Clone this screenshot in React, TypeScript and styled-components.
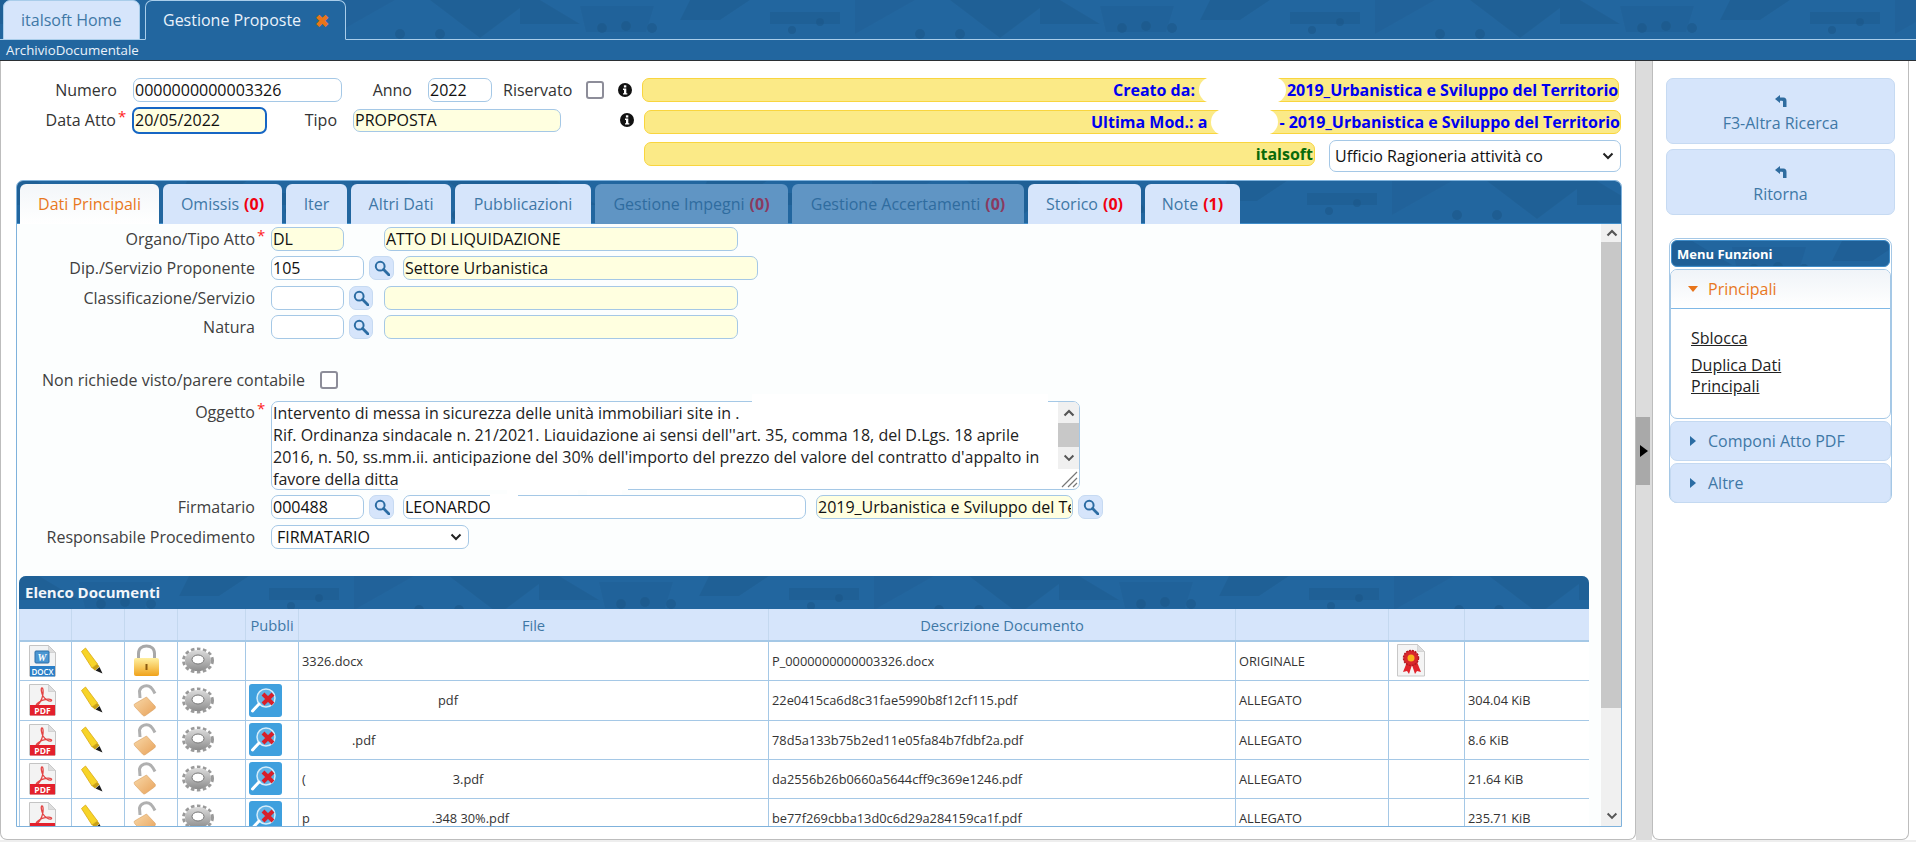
import React from "react";
import styled, { createGlobalStyle, css } from "styled-components";

const skylineSvg = `<svg xmlns='http://www.w3.org/2000/svg' width='520' height='44'><g fill='#1d5a8e' fill-opacity='.55'><path d='M0 0h20l40 24h-60z'/><path d='M60 6h74l-8 26h-60z' fill-opacity='.35'/><path d='M170 0h60l-30 20h-40z'/><path d='M250 12h70v12h-70z'/><path d='M335 0h60l-60 34z' fill-opacity='.3'/><path d='M430 0h90v8l-40 30z'/></g><g fill='#1b5688' fill-opacity='.6'><circle cx='82' cy='28' r='5'/><circle cx='106' cy='26' r='5'/><circle cx='132' cy='28' r='5'/><circle cx='272' cy='30' r='4'/><circle cx='300' cy='22' r='4'/><circle cx='400' cy='34' r='5'/><circle cx='440' cy='34' r='5'/></g></svg>`;
const skyline = `url("data:image/svg+xml,${encodeURIComponent(skylineSvg)}")`;

const blueBand = css`
  background-color: #22669f;
  background-image: ${skyline};
`;

const Global = createGlobalStyle`
  html, body { margin: 0; padding: 0; overflow: hidden; background: #fff; }
  * { box-sizing: border-box; }
  body { font-family: "Open Sans", "Liberation Sans", sans-serif; font-size: 16px; color: #333; }
`;

const Page = styled.div`
  width: 1916px;
  height: 842px;
  display: flex;
  flex-direction: column;
  overflow: hidden;
`;
const TopBar = styled.div`
  ${blueBand}
  height: 40px;
  padding-left: 3px;
  display: flex;
  align-items: flex-end;
  gap: 5px;
  border-bottom: 1px solid #a9cdea;
`;
const TopTab = styled.div<{ $active?: boolean }>`
  height: 40px;
  margin-bottom: -1px;
  display: flex;
  align-items: center;
  font-size: 16px;
  border: 1px solid #a9cdea;
  border-radius: 7px 7px 0 0;
  ${(p) =>
    p.$active
      ? css`
          background: #22669f;
          color: #eaf2fb;
          border-bottom-color: #22669f;
          width: 201px;
          padding-left: 17px;
        `
      : css`
          background: #d6e5fb;
          color: #3f78a6;
          width: 137px;
          padding-left: 17px;
        `}
`;
const Close = styled.span`
  color: #e8751a;
  font-weight: 700;
  font-size: 17px;
  margin-left: 14px;
`;
const SubBar = styled.div`
  background: #22669f;
  height: 21px;
  padding-left: 6px;
  color: #eaf2fb;
  font-size: 13.3px;
  line-height: 21px;
  border-bottom: 1px solid #2b2f33;
  flex: none;
`;
const Work = styled.div`
  flex: 1;
  display: flex;
  min-height: 0;
  background: #fff;
  border-bottom: 2px solid #eee;
`;
const MainPanel = styled.div`
  width: 1636px;
  background: #fff;
  border: 1px solid #bdbdbd;
  border-top: none;
  border-radius: 0 0 7px 7px;
  display: flex;
  flex-direction: column;
`;
const Gutter = styled.div`
  width: 16px;
  background: #dcdcdc;
  display: flex;
  align-items: center;
`;
const Handle = styled.div`
  width: 14px;
  height: 68px;
  background: #a9a9a9;
  display: flex;
  align-items: center;
  justify-content: flex-end;
  padding-right: 2px;
`;
const HandleArrow = styled.div`
  width: 0;
  height: 0;
  border-left: 8px solid #000;
  border-top: 6px solid transparent;
  border-bottom: 6px solid transparent;
`;
const SidePanel = styled.div`
  width: 257px;
  background: #fff;
  border: 1px solid #bdbdbd;
  border-top: none;
  border-radius: 0 0 7px 7px;
  padding: 17px 13px 0;
`;

/* header form */
const Head = styled.div`
  padding-top: 17px;
  height: 119px;
  flex: none;
`;
const HeadRow = styled.div<{ $h: number; $top?: number }>`
  display: flex;
  align-items: center;
  height: ${(p) => p.$h}px;
  margin-top: ${(p) => p.$top ?? 0}px;
`;
const HLabel = styled.span<{ $w: number }>`
  width: ${(p) => p.$w}px;
  text-align: right;
  flex: none;
  position: relative;
  white-space: nowrap;
`;
const Star = styled.span`
  position: absolute;
  left: 100%;
  top: -3px;
  margin-left: 2px;
  color: #f22;
  font-size: 15px;
`;
const PlainLabel = styled.span<{ $ml: number }>`
  margin-left: ${(p) => p.$ml}px;
  white-space: nowrap;
`;
const Field = styled.input<{ $w: number; $ml?: number; $yellow?: boolean; $focus?: boolean; $h?: number }>`
  width: ${(p) => p.$w}px;
  height: ${(p) => p.$h ?? 24}px;
  margin-left: ${(p) => p.$ml ?? 0}px;
  flex: none;
  padding: 0 1px;
  font: 16px "Open Sans", sans-serif;
  color: #111;
  border: 1px solid #a5c8e6;
  border-radius: 7px;
  background: ${(p) => (p.$yellow ? "#ffffe0" : "#fff")};
  outline: none;
  ${(p) =>
    p.$focus &&
    css`
      border: 2px solid #1666c4;
      border-radius: 7px;
    `}
`;
const CheckBox = styled.span<{ $ml: number }>`
  display: inline-block;
  flex: none;
  width: 18px;
  height: 18px;
  margin-left: ${(p) => p.$ml}px;
  border: 2px solid #8d8d99;
  border-radius: 3px;
  background: #fff;
`;
const InfoWrap = styled.span<{ $ml: number }>`
  margin-left: ${(p) => p.$ml}px;
  width: 14px;
  height: 14px;
  display: flex;
  flex: none;
`;
const Yellow = styled.div<{ $w: number; $ml: number; $self?: string; $top?: number }>`
  width: ${(p) => p.$w}px;
  height: 24px;
  margin-left: ${(p) => p.$ml}px;
  margin-top: ${(p) => p.$top ?? 0}px;
  align-self: ${(p) => p.$self ?? "center"};
  flex: none;
  background: #fbea87;
  border: 1px solid #f9d53e;
  border-radius: 7px;
  display: flex;
  justify-content: flex-end;
  align-items: center;
  font-weight: 700;
  font-size: 16px;
  color: #0000f0;
  white-space: nowrap;
  overflow: visible;
`;
const Green = styled.span`
  color: #0a6a0a;
  padding-right: 1px;
`;
const Masked = styled.span<{ $w: number }>`
  width: ${(p) => p.$w}px;
  height: 26px;
  margin: 0 1px 0 4px;
  flex: none;
  background: #fff;
  border-radius: 14px;
`;
const SelectBox = styled.div<{ $w: number; $h: number; $ml: number }>`
  width: ${(p) => p.$w}px;
  height: ${(p) => p.$h}px;
  margin-left: ${(p) => p.$ml}px;
  flex: none;
  position: relative;
  display: flex;
  align-items: center;
  padding-left: 5px;
  border: 1px solid #a5c8e6;
  border-radius: 7px;
  background: #fff;
  color: #111;
  white-space: nowrap;
`;
const SelectArrow = styled.svg`
  position: absolute;
  right: 6px;
  top: 50%;
  margin-top: -4px;
`;

/* tabs */
const TabPanel = styled.div`
  margin-left: 15px;
  width: 1606px;
  height: 647px;
  flex: none;
  border: 1px solid #7fb2dc;
  border-top-width: 1px;
  border-radius: 7px 7px 0 0;
  display: flex;
  flex-direction: column;
  overflow: hidden;
`;
const Strip = styled.div`
  ${blueBand}
  height: 43px;
  flex: none;
  display: flex;
  align-items: flex-end;
  padding-left: 3px;
  gap: 4px;
  border-bottom: 1px solid #3f8cc8;
`;
const Tab = styled.div<{ $w: number; $state?: "active" | "off" }>`
  width: ${(p) => p.$w}px;
  height: 40px;
  margin-bottom: -1px;
  flex: none;
  display: flex;
  align-items: center;
  justify-content: center;
  border-radius: 6px 6px 0 0;
  font-size: 16px;
  white-space: nowrap;
  background: #d6e5fb;
  color: #3f78a6;
  ${(p) =>
    p.$state === "active" &&
    css`
      background: linear-gradient(#f3f6f9, #fff);
      color: #e8781e;
    `}
  ${(p) =>
    p.$state === "off" &&
    css`
      background: #6095c4;
      color: #2f6c9f;
    `}
`;
const Count = styled.b<{ $off?: boolean }>`
  color: ${(p) => (p.$off ? "#8a3a60" : "#f00010")};
  margin-left: 5px;
  font-weight: 700;
`;
const TabBody = styled.div`
  flex: 1;
  min-height: 0;
  display: flex;
  background: #fcfefe;
`;
const FormArea = styled.div`
  width: 1584px;
  flex: none;
  position: relative;
  padding-top: 3px;
  overflow: hidden;
`;
const Row = styled.div<{ $top?: number }>`
  display: flex;
  align-items: center;
  margin-top: ${(p) => p.$top ?? 0}px;
`;
const TopRow = styled(Row)`
  align-items: flex-start;
`;
const Label = styled.span`
  width: 238px;
  margin-right: 16px;
  flex: none;
  position: relative;
  text-align: right;
  white-space: nowrap;
  color: #404040;
`;
const CheckLabel = styled.span`
  margin-left: 25px;
  white-space: nowrap;
  color: #404040;
`;
const LookBtn = styled.span<{ $w?: number; $ml?: number }>`
  width: ${(p) => p.$w ?? 25}px;
  height: 24px;
  margin-left: ${(p) => p.$ml ?? 5}px;
  flex: none;
  background: #d6e5fb;
  border: 1px solid #c6daf2;
  border-radius: 7px;
  display: flex;
  align-items: center;
  justify-content: center;
`;
const Memo = styled.div`
  width: 809px;
  height: 89px;
  flex: none;
  position: relative;
  border: 1px solid #a5c8e6;
  border-radius: 7px;
  background: #fff;
  padding: 0 24px 0 1px;
  line-height: 22px;
  color: #222;
  overflow: hidden;
  white-space: nowrap;
`;
const MemoBar = styled.div`
  position: absolute;
  top: 0;
  right: 0;
  width: 21px;
  height: 67px;
  background: #f0f0f0;
  display: flex;
  flex-direction: column;
`;
const MemoThumb = styled.div`
  height: 24px;
  background: #c8c8c8;
`;
const ArrowCell = styled.div<{ $h: number }>`
  height: ${(p) => p.$h}px;
  flex: none;
  display: flex;
  align-items: center;
  justify-content: center;
  background: #f0f0f0;
`;
const Grip = styled.svg`
  position: absolute;
  right: 1px;
  bottom: 1px;
`;
const Blot = styled.div<{ $x: number; $y: number; $w: number; $h: number }>`
  position: absolute;
  left: ${(p) => p.$x - 17}px;
  top: ${(p) => p.$y - 224}px;
  width: ${(p) => p.$w}px;
  height: ${(p) => p.$h}px;
  background: #fff;
`;
const Scroll = styled.div`
  width: 21px;
  flex: none;
  display: flex;
  flex-direction: column;
  background: #f0f0f0;
`;
const ScrollThumb = styled.div`
  height: 466px;
  background: #c8c8c8;
  flex: none;
`;
const Spacer = styled.div`
  flex: 1;
`;

/* documents */
const Docs = styled.div`
  margin: 27px 0 0 2px;
  width: 1570px;
  height: 253px;
  border-radius: 7px 7px 0 0;
  overflow: hidden;
  border-bottom: 1px solid #a5c8e6;
`;
const DocsTitle = styled.div`
  ${blueBand}
  height: 33px;
  padding-left: 6px;
  line-height: 32px;
  color: #f2f6fa;
  font-weight: 700;
  font-size: 15px;
`;
const Table = styled.table`
  border-collapse: collapse;
  table-layout: fixed;
  width: 1570px;
`;
const Th = styled.th`
  height: 32px;
  padding: 0;
  background: #d6e5fb;
  border: 1px solid #c4d8ef;
  border-bottom: 2px solid #a5c8e6;
  border-top: none;
  font-weight: 400;
  font-size: 14.7px;
  color: #3f78a6;
  overflow: hidden;
  white-space: nowrap;
`;
const Td = styled.td<{ $h: number }>`
  height: ${(p) => p.$h}px;
  padding: 0 0 0 3px;
  background: #fff;
  border: 1px solid #a5c8e6;
  font-size: 12.8px;
  color: #333;
  white-space: nowrap;
  overflow: hidden;
  vertical-align: middle;
`;
const IconTd = styled(Td)<{ $pad: number }>`
  padding-left: ${(p) => p.$pad}px;
  line-height: 0;
`;
const Pad = styled.span<{ $w: number }>`
  display: inline-block;
  width: ${(p) => p.$w}px;
`;

/* side */
const BigBtn = styled.div`
  height: 66px;
  margin-bottom: 5px;
  background: #d6e5fb;
  border: 1px solid #c6daf2;
  border-radius: 7px;
  display: flex;
  flex-direction: column;
  align-items: center;
  padding-top: 16px;
  color: #3f78a6;
  font-size: 16px;
  line-height: 22px;
`;
const BtnLabel = styled.span`
  margin-top: 5px;
`;
const Menu = styled.div`
  margin: 23px 3px 0;
  height: 265px;
  border: 1px solid #a5c8e6;
  border-radius: 8px;
`;
const MenuTitle = styled.div`
  ${blueBand}
  margin: 1px 1px 2px;
  height: 27px;
  border-radius: 6px;
  padding-left: 5px;
  color: #fff;
  font-weight: 700;
  font-size: 13px;
  line-height: 26px;
  border: 1px solid #3f8cc8;
`;
const Section = styled.div`
  border: 1px solid #a5c8e6;
  border-radius: 7px;
  height: 150px;
  background: #fff;
  overflow: hidden;
`;
const SecHead = styled.div<{ $open?: boolean }>`
  display: flex;
  align-items: center;
  font-size: 16px;
  padding-left: ${(p) => (p.$open ? 17 : 19)}px;
  ${(p) =>
    p.$open
      ? css`
          height: 39px;
          background: linear-gradient(#f0f4f8, #fff);
          color: #e8781e;
          border-bottom: 1px solid #7fb8e6;
        `
      : css`
          height: 40px;
          margin-top: 2px;
          background: #d6e5fb;
          color: #3f78a6;
          border: 1px solid #c4d9f1;
          border-radius: 7px;
        `}
`;
const TriDown = styled.span`
  width: 0;
  height: 0;
  margin-right: 10px;
  border-top: 6px solid #e8751a;
  border-left: 5px solid transparent;
  border-right: 5px solid transparent;
`;
const TriRight = styled.span`
  width: 0;
  height: 0;
  margin-right: 12px;
  border-left: 6px solid #2b6ca3;
  border-top: 5px solid transparent;
  border-bottom: 5px solid transparent;
`;
const Links = styled.div`
  padding: 19px 0 0 20px;
`;
const MenuLink = styled.a`
  display: block;
  width: 150px;
  margin-bottom: 6px;
  color: #222;
  text-decoration: underline;
  font-size: 16px;
  line-height: 21px;
`;

const Info = () => (
  <svg width="14" height="14" viewBox="0 0 14 14">
    <circle cx="7" cy="7" r="7" fill="#111" />
    <rect x="5.9" y="2.3" width="2.4" height="2.2" fill="#fff" />
    <path d="M5 5.6h3.3v4.6h1v1.4H5v-1.4h1V7H5z" fill="#fff" />
  </svg>
);
const Mag = () => (
  <svg width="16" height="16" viewBox="0 0 16 16" fill="none">
    <circle cx="6.2" cy="6.2" r="4.4" stroke="#2b6ca3" strokeWidth="2" />
    <path d="M9.6 9.6 15 15" stroke="#2b6ca3" strokeWidth="2.8" strokeLinecap="round" />
  </svg>
);
const Chev = ({ w = 12, c = "#222" }: { w?: number; c?: string }) => (
  <svg width={w} height={w * 0.65} viewBox="0 0 12 8" fill="none">
    <path d="M1.5 1.5 6 6l4.500-4.500" stroke={c} strokeWidth="2" />
  </svg>
);
const ChevUp = () => (
  <svg width="12" height="8" viewBox="0 0 12 8" fill="none">
    <path d="M1.500 6.500 6 2l4.500 4.500" stroke="#555" strokeWidth="2.200" />
  </svg>
);
const ReturnArrow = () => (
  <svg width="12" height="12" viewBox="0 0 12 12">
    <path d="M0 4 5 0v2.500h3.500C10.500 2.500 11.500 4 11.500 6v6H8V6.500C8 6 7.700 5.700 7 5.700H5V8z" fill="#2f6c9f" />
  </svg>
);

const DocxIcon = () => (
  <svg width="27" height="32" viewBox="0 0 27 32">
    <path d="M.5.500h19l7 7v23.500H.5z" fill="#f2f3f4" stroke="#c4c4c4" />
    <path d="M19.500.500v7h7z" fill="#dcdcdc" stroke="#c4c4c4" strokeWidth=".6" />
    <rect x="6" y="6" width="14" height="12" rx="1" fill="#4a96d2" stroke="#2d6ea8" />
    <text x="13" y="16" fontSize="10" fontWeight="700" fontStyle="italic" fill="#fff" textAnchor="middle" fontFamily="Liberation Serif">W</text>
    <rect x="1" y="21" width="25" height="10.500" fill="#2a7fc8" />
    <text x="13.500" y="29.500" fontSize="8" fontWeight="600" fill="#fff" textAnchor="middle" fontFamily="Open Sans">DOCX</text>
  </svg>
);
const PdfIcon = () => (
  <svg width="27" height="32" viewBox="0 0 27 32">
    <path d="M.5.500h19l7 7v23.500H.5z" fill="#f3f3f3" stroke="#c4c4c4" />
    <path d="M19.500.500v7h7z" fill="#dedede" stroke="#c4c4c4" strokeWidth=".6" />
    <path d="M13 4c-1.500 0-.5 5 1 8 2 3.500 6 5.500 8 5 1.500-.5 0-2-3-1.800-3 .2-8 2-11 4.500-1.500 1.500-.5 2.500 1 1 2-2 4.500-7 5-11 .2-2.500.2-5.700-1-5.700z" fill="none" stroke="#e34444" strokeWidth="1.300" />
    <rect x="1" y="21" width="25" height="10.500" fill="#e3202c" />
    <text x="13.500" y="29.700" fontSize="8.500" fontWeight="700" fill="#fff" textAnchor="middle" fontFamily="Open Sans">PDF</text>
  </svg>
);
const Marker = () => (
  <svg width="23" height="28" viewBox="0 0 23 28">
    <path d="M.500 4.500 4.500 1l12 16-5.500 4z" fill="#f7d428" stroke="#d9a814" strokeWidth=".8" />
    <path d="m11 21 5.500-4 2 2.500-4.500 4z" fill="#c9a012" />
    <path d="m14.500 23.500 4-3.500 3 6.500z" fill="#1c1c1c" />
  </svg>
);
const LockIcon = () => (
  <svg width="27" height="33" viewBox="0 0 27 33">
    <defs>
      <linearGradient id="goldL" x1="0" y1="0" x2="0" y2="1">
        <stop offset="0" stopColor="#fff0a0" />
        <stop offset="1" stopColor="#f0a21a" />
      </linearGradient>
    </defs>
    <path d="M5.500 15V9.500C5.500 4.500 9 2 13.500 2s8 2.500 8 7.500V15" fill="none" stroke="#a8a8a8" strokeWidth="3" />
    <rect x="1" y="14" width="25" height="18" rx="2" fill="url(#goldL)" />
    <rect x="12.500" y="20" width="2" height="6" fill="#8a5a10" />
  </svg>
);
const OpenLock = () => (
  <svg width="25" height="33" viewBox="0 0 25 33">
    <defs>
      <linearGradient id="tanL" x1="0" y1="0" x2="1" y2="1">
        <stop offset="0" stopColor="#f8d8a8" />
        <stop offset="1" stopColor="#e8a25a" />
      </linearGradient>
    </defs>
    <path d="M7 14 6.500 7C7.500 2 14 0 18 3.500c2 2 3 4 4 6" fill="none" stroke="#b0b0b0" strokeWidth="3" />
    <path d="M1.500 20 13.500 13 22 22c.8 1 .5 2-.5 3l-9 6.500c-1 .8-2.200.5-3-.5L2 23c-.8-1-1-2.200-.5-3z" fill="url(#tanL)" stroke="#d8a060" strokeWidth=".6" />
  </svg>
);
const Gear = () => (
  <svg width="32" height="27" viewBox="0 0 32 27">
    <defs>
      <linearGradient id="gearG" x1="0" y1="0" x2="0" y2="1">
        <stop offset="0" stopColor="#dcdcdc" />
        <stop offset="1" stopColor="#8d8d8d" />
      </linearGradient>
    </defs>
    <ellipse cx="16" cy="13.500" rx="14.500" ry="11.500" fill="none" stroke="#9a9a9a" strokeWidth="3" strokeDasharray="3.500 2.500" />
    <ellipse cx="16" cy="13.500" rx="13" ry="10.500" fill="url(#gearG)" />
    <ellipse cx="16" cy="12.500" rx="6" ry="4.500" fill="#fff" stroke="#777" />
  </svg>
);
const PubBtn = () => (
  <svg width="33" height="33" viewBox="0 0 33 33">
    <rect width="33" height="33" rx="3" fill="#3fa0de" />
    <circle cx="17" cy="14" r="9" fill="#5fb2e6" stroke="#d4ecfa" strokeWidth="1.500" />
    <path d="M10 20 3.500 27" stroke="#fff" strokeWidth="3" strokeLinecap="round" />
    <path d="m14 10 10 10M24 10 14 20" stroke="#d81f2a" strokeWidth="4" />
  </svg>
);
const Cert = () => (
  <svg width="28" height="33" viewBox="0 0 28 33">
    <path d="M.500.500h20l7 7v24.500H.500z" fill="#f4f4f4" stroke="#c8c8c8" />
    <path d="M20.500.500v7h7z" fill="#dedede" stroke="#c8c8c8" strokeWidth=".6" />
    <path d="m10 18-4 10 4-1 2 3 3-9 3 9 2-3 4 1-4-10z" fill="#e0222a" />
    <circle cx="14" cy="14" r="7.500" fill="#d9262c" stroke="#b01a20" strokeWidth="1.500" strokeDasharray="2 1" />
    <circle cx="14" cy="14" r="3.500" fill="#f8b21c" />
  </svg>
);

type DocRow = { doc: boolean; pad: number; head?: string; file: string; descr: string; kind: string; size: string };
const rows: DocRow[] = [
  { doc: true, pad: 0, file: "3326.docx", descr: "P_0000000000003326.docx", kind: "ORIGINALE", size: "" },
  { doc: false, pad: 136, file: "pdf", descr: "22e0415ca6d8c31fae5990b8f12cf115.pdf", kind: "ALLEGATO", size: "304.04 KiB" },
  { doc: false, pad: 50, file: ".pdf", descr: "78d5a133b75b2ed11e05fa84b7fdbf2a.pdf", kind: "ALLEGATO", size: "8.6 KiB" },
  { doc: false, pad: 147, head: "(", file: "3.pdf", descr: "da2556b26b0660a5644cff9c369e1246.pdf", kind: "ALLEGATO", size: "21.64 KiB" },
  { doc: false, pad: 122, head: "p", file: ".348 30%.pdf", descr: "be77f269cbba13d0c6d29a284159ca1f.pdf", kind: "ALLEGATO", size: "235.71 KiB" },
];
const colW = [52, 53, 53, 68, 53, 470, 467, 153, 76, 125];
const rowH = [39, 40, 39, 39, 39];

export default function App() {
  return (
    <Page>
      <Global />
      <TopBar>
        <TopTab>italsoft Home</TopTab>
        <TopTab $active>
          Gestione Proposte<Close>✖</Close>
        </TopTab>
      </TopBar>
      <SubBar>ArchivioDocumentale</SubBar>
      <Work>
        <MainPanel>
          <Head>
            <HeadRow $h={24}>
              <HLabel $w={116}>Numero</HLabel>
              <Field $w={209} $ml={16} defaultValue="0000000000003326" readOnly />
              <HLabel $w={70}>Anno</HLabel>
              <Field $w={64} $ml={16} defaultValue="2022" readOnly />
              <PlainLabel $ml={11}>Riservato</PlainLabel>
              <CheckBox $ml={14} />
              <InfoWrap $ml={14}><Info /></InfoWrap>
              <Yellow $w={977} $ml={10}>
                Creato da:<Masked $w={87} />2019_Urbanistica e Sviluppo del Territorio
              </Yellow>
            </HeadRow>
            <HeadRow $h={28} $top={4}>
              <HLabel $w={115}>
                Data Atto<Star>*</Star>
              </HLabel>
              <Field $w={135} $ml={16} $yellow $focus $h={27} defaultValue="20/05/2022" readOnly />
              <HLabel $w={70}>Tipo</HLabel>
              <Field $w={208} $ml={16} $yellow $h={23} defaultValue="PROPOSTA" readOnly />
              <InfoWrap $ml={59}><Info /></InfoWrap>
              <Yellow $w={977} $ml={10} $self="flex-end">
                Ultima Mod.: a<Masked $w={67} />- 2019_Urbanistica e Sviluppo del Territorio
              </Yellow>
            </HeadRow>
            <HeadRow $h={32} $top={6}>
              <Yellow $w={671} $ml={643} $self="flex-start" $top={2}>
                <Green>italsoft</Green>
              </Yellow>
              <SelectBox $w={292} $h={32} $ml={14}>
                Ufficio Ragioneria attività co
                <SelectArrow width="12" height="8" viewBox="0 0 12 8" fill="none">
                  <path d="M1.500 1.500 6 6l4.500-4.500" stroke="#222" strokeWidth="2" />
                </SelectArrow>
              </SelectBox>
            </HeadRow>
          </Head>
          <TabPanel>
            <Strip>
              <Tab $w={139} $state="active">Dati Principali</Tab>
              <Tab $w={119}>Omissis<Count>(0)</Count></Tab>
              <Tab $w={61}>Iter</Tab>
              <Tab $w={100}>Altri Dati</Tab>
              <Tab $w={136}>Pubblicazioni</Tab>
              <Tab $w={193} $state="off">Gestione Impegni<Count $off>(0)</Count></Tab>
              <Tab $w={232} $state="off">Gestione Accertamenti<Count $off>(0)</Count></Tab>
              <Tab $w={113}>Storico<Count>(0)</Count></Tab>
              <Tab $w={95}>Note<Count>(1)</Count></Tab>
            </Strip>
            <TabBody>
              <FormArea>
                <Row>
                  <Label>Organo/Tipo Atto<Star>*</Star></Label>
                  <Field $w={73} $yellow defaultValue="DL" readOnly />
                  <Field $w={354} $ml={40} $yellow defaultValue="ATTO DI LIQUIDAZIONE" readOnly />
                </Row>
                <Row $top={5}>
                  <Label>Dip./Servizio Proponente</Label>
                  <Field $w={93} defaultValue="105" readOnly />
                  <LookBtn><Mag /></LookBtn>
                  <Field $w={355} $ml={9} $yellow defaultValue="Settore Urbanistica" readOnly />
                </Row>
                <Row $top={6}>
                  <Label>Classificazione/Servizio</Label>
                  <Field $w={73} />
                  <LookBtn $w={24} $ml={5}><Mag /></LookBtn>
                  <Field $w={354} $ml={11} $yellow />
                </Row>
                <Row $top={5}>
                  <Label>Natura</Label>
                  <Field $w={73} />
                  <LookBtn $w={24} $ml={5}><Mag /></LookBtn>
                  <Field $w={354} $ml={11} $yellow />
                </Row>
                <Row $top={30}>
                  <CheckLabel>Non richiede visto/parere contabile</CheckLabel>
                  <CheckBox $ml={15} />
                </Row>
                <TopRow $top={10}>
                  <Label>Oggetto<Star>*</Star></Label>
                  <Memo>
                    Intervento di messa in sicurezza delle unità immobiliari site in .
                    <br />
                    Rif. Ordinanza sindacale n. 21/2021. Liquidazione ai sensi dell''art. 35, comma 18, del D.Lgs. 18 aprile
                    <br />
                    2016, n. 50, ss.mm.ii. anticipazione del 30% dell'importo del prezzo del valore del contratto d'appalto in
                    <br />
                    favore della ditta
                    <MemoBar>
                      <ArrowCell $h={21}><ChevUp /></ArrowCell>
                      <MemoThumb />
                      <ArrowCell $h={22}><Chev c="#555" /></ArrowCell>
                    </MemoBar>
                    <Grip width="18" height="18" viewBox="0 0 18 18" fill="none" stroke="#777" strokeWidth="1.200">
                      <path d="M2 17 17 2M8 17 17 8M13 17l4-4" />
                    </Grip>
                  </Memo>
                </TopRow>
                <Row $top={5}>
                  <Label>Firmatario</Label>
                  <Field $w={93} defaultValue="000488" readOnly />
                  <LookBtn><Mag /></LookBtn>
                  <Field $w={403} $ml={9} defaultValue="LEONARDO" readOnly />
                  <Field $w={257} $ml={10} $yellow defaultValue="2019_Urbanistica e Sviluppo del Territorio" readOnly />
                  <LookBtn><Mag /></LookBtn>
                </Row>
                <Row $top={6}>
                  <Label>Responsabile Procedimento</Label>
                  <SelectBox $w={198} $h={24} $ml={0}>
                    FIRMATARIO
                    <SelectArrow width="12" height="8" viewBox="0 0 12 8" fill="none">
                      <path d="M1.500 1.500 6 6l4.500-4.500" stroke="#222" strokeWidth="2" />
                    </SelectArrow>
                  </SelectBox>
                </Row>
                <Docs>
                  <DocsTitle>Elenco Documenti</DocsTitle>
                  <Table>
                    <colgroup>
                      {colW.map((w, i) => (
                        <col key={i} width={w} />
                      ))}
                    </colgroup>
                    <thead>
                      <tr>
                        <Th />
                        <Th />
                        <Th />
                        <Th />
                        <Th>Pubbli</Th>
                        <Th>File</Th>
                        <Th>Descrizione Documento</Th>
                        <Th />
                        <Th />
                        <Th />
                      </tr>
                    </thead>
                    <tbody>
                      {rows.map((r, i) => (
                        <tr key={i}>
                          <IconTd $h={rowH[i]} $pad={9}>{r.doc ? <DocxIcon /> : <PdfIcon />}</IconTd>
                          <IconTd $h={rowH[i]} $pad={9}><Marker /></IconTd>
                          <IconTd $h={rowH[i]} $pad={8}>{r.doc ? <LockIcon /> : <OpenLock />}</IconTd>
                          <IconTd $h={rowH[i]} $pad={4}><Gear /></IconTd>
                          <IconTd $h={rowH[i]} $pad={3}>{r.doc ? null : <PubBtn />}</IconTd>
                          <Td $h={rowH[i]}>
                            {r.head}
                            <Pad $w={r.pad} />
                            {r.file}
                          </Td>
                          <Td $h={rowH[i]}>{r.descr}</Td>
                          <Td $h={rowH[i]}>{r.kind}</Td>
                          <IconTd $h={rowH[i]} $pad={8}>{r.doc ? <Cert /> : null}</IconTd>
                          <Td $h={rowH[i]}>{r.size}</Td>
                        </tr>
                      ))}
                    </tbody>
                  </Table>
                </Docs>
                <Blot $x={752} $y={394} $w={296} $h={10} />
                <Blot $x={433} $y={441} $w={207} $h={6} />
                <Blot $x={398} $y={466} $w={230} $h={24} />
                <Blot $x={507} $y={488} $w={71} $h={7} />
                <Blot $x={587} $y={488} $w={35} $h={7} />
                <Blot $x={490} $y={494} $w={28} $h={24} />
              </FormArea>
              <Scroll>
                <ArrowCell $h={18}><ChevUp /></ArrowCell>
                <ScrollThumb />
                <Spacer />
                <ArrowCell $h={20}><Chev c="#555" /></ArrowCell>
              </Scroll>
            </TabBody>
          </TabPanel>
        </MainPanel>
        <Gutter>
          <Handle><HandleArrow /></Handle>
        </Gutter>
        <SidePanel>
          <BigBtn>
            <ReturnArrow />
            <BtnLabel>F3-Altra Ricerca</BtnLabel>
          </BigBtn>
          <BigBtn>
            <ReturnArrow />
            <BtnLabel>Ritorna</BtnLabel>
          </BigBtn>
          <Menu>
            <MenuTitle>Menu Funzioni</MenuTitle>
            <Section>
              <SecHead $open><TriDown />Principali</SecHead>
              <Links>
                <MenuLink>Sblocca</MenuLink>
                <MenuLink>Duplica Dati Principali</MenuLink>
              </Links>
            </Section>
            <SecHead><TriRight />Componi Atto PDF</SecHead>
            <SecHead><TriRight />Altre</SecHead>
          </Menu>
        </SidePanel>
      </Work>
    </Page>
  );
}
